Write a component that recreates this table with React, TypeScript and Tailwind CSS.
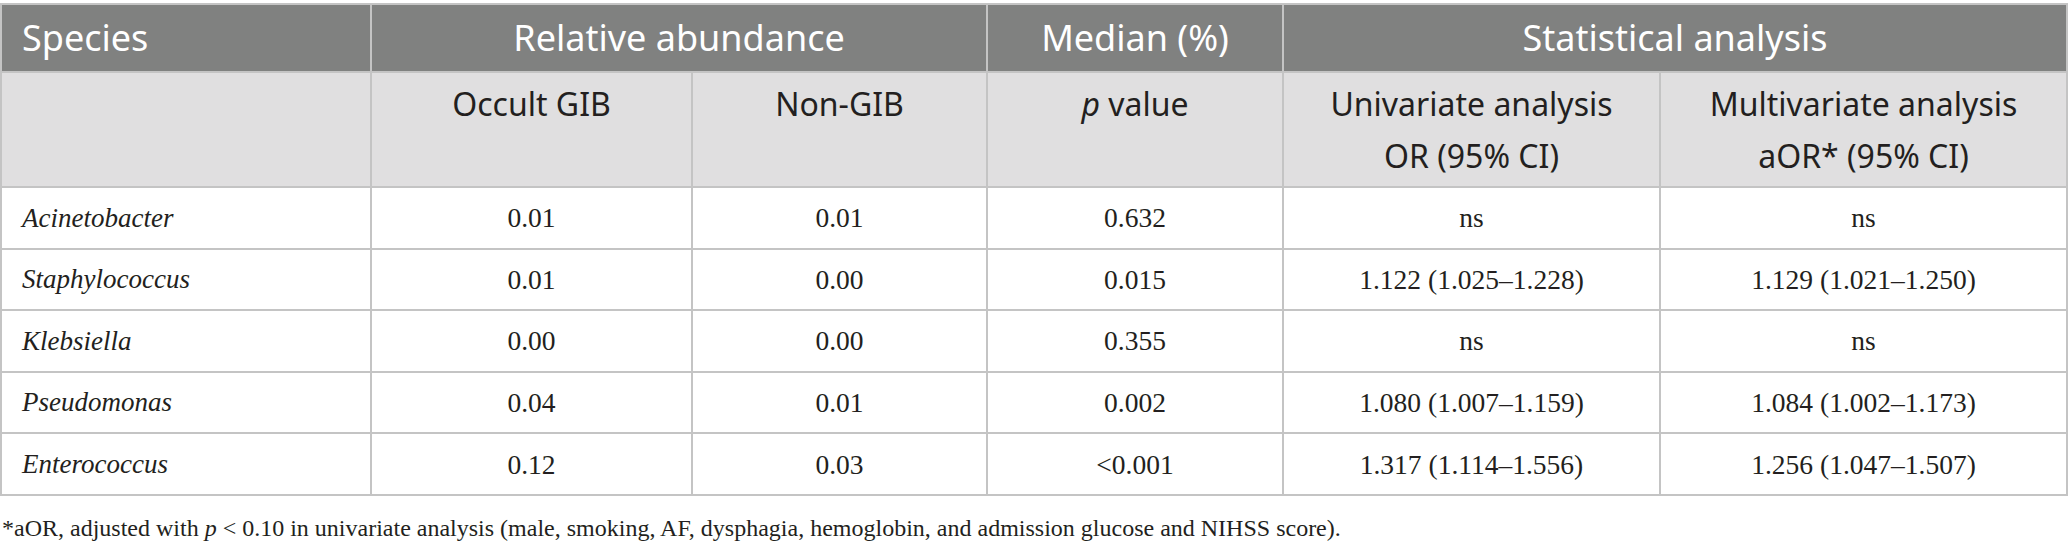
import React from 'react'

type Row = {
  name: string
  occult: string
  non: string
  p: string
  uni: string
  multi: string
}

const ROWS: Row[] = [
  { name: 'Acinetobacter', occult: '0.01', non: '0.01', p: '0.632', uni: 'ns', multi: 'ns' },
  { name: 'Staphylococcus', occult: '0.01', non: '0.00', p: '0.015', uni: '1.122 (1.025–1.228)', multi: '1.129 (1.021–1.250)' },
  { name: 'Klebsiella', occult: '0.00', non: '0.00', p: '0.355', uni: 'ns', multi: 'ns' },
  { name: 'Pseudomonas', occult: '0.04', non: '0.01', p: '0.002', uni: '1.080 (1.007–1.159)', multi: '1.084 (1.002–1.173)' },
  { name: 'Enterococcus', occult: '0.12', non: '0.03', p: '<0.001', uni: '1.317 (1.114–1.556)', multi: '1.256 (1.047–1.507)' },
]

const sans = "font-['Noto_Sans',sans-serif]"
const serif = "font-['Liberation_Serif',serif]"
const cell = 'border-2 border-[#c4c4c4]'

export default function App() {
  return (
    <div className="min-h-screen bg-white pt-[3px] text-[#231f20]">
      <table className="w-full table-fixed border-collapse">
        <colgroup>
          <col className="w-[370px]" />
          <col className="w-[321px]" />
          <col className="w-[295px]" />
          <col className="w-[296px]" />
          <col className="w-[377px]" />
          <col />
        </colgroup>
        <thead>
          {/* dark top band */}
          <tr className={`h-[68px] bg-[#808180] text-[36px] text-white ${sans}`}>
            <th className={`${cell} pl-5 text-left font-normal`}>Species</th>
            <th colSpan={2} className={`${cell} font-normal`}>
              Relative abundance
            </th>
            <th className={`${cell} font-normal`}>Median (%)</th>
            <th colSpan={2} className={`${cell} font-normal`}>
              Statistical analysis
            </th>
          </tr>
          <tr className={`h-[115px] bg-[#e0dfe0] align-top text-[32px] leading-[52px] ${sans}`}>
            <th className={`${cell} font-normal`} />
            <th className={`${cell} pt-[5px] font-normal`}>Occult GIB</th>
            <th className={`${cell} pt-[5px] font-normal`}>Non-GIB</th>
            <th className={`${cell} pt-[5px] font-normal`}>
              <i>p</i> value
            </th>
            <th className={`${cell} pt-[5px] font-normal`}>
              Univariate analysis
              <br />
              OR (95% CI)
            </th>
            <th className={`${cell} pt-[5px] font-normal`}>
              Multivariate analysis
              <br />
              aOR* (95% CI)
            </th>
          </tr>
        </thead>
        <tbody className={`text-[27.5px] ${serif}`}>
          {ROWS.map((r) => (
            <tr key={r.name} className="h-[61.6px]">
              <td className={`${cell} pl-5 text-[27px] italic`}>{r.name}</td>
              <td className={`${cell} text-center`}>{r.occult}</td>
              <td className={`${cell} text-center`}>{r.non}</td>
              <td className={`${cell} text-center`}>{r.p}</td>
              <td className={`${cell} text-center`}>{r.uni}</td>
              <td className={`${cell} text-center`}>{r.multi}</td>
            </tr>
          ))}
        </tbody>
      </table>
      <p className={`mt-[14px] pl-[2px] text-[24px] ${serif}`}>
        *aOR, adjusted with <i>p</i> &lt; 0.10 in univariate analysis (male, smoking, AF, dysphagia,
        hemoglobin, and admission glucose and NIHSS score).
      </p>
    </div>
  )
}
